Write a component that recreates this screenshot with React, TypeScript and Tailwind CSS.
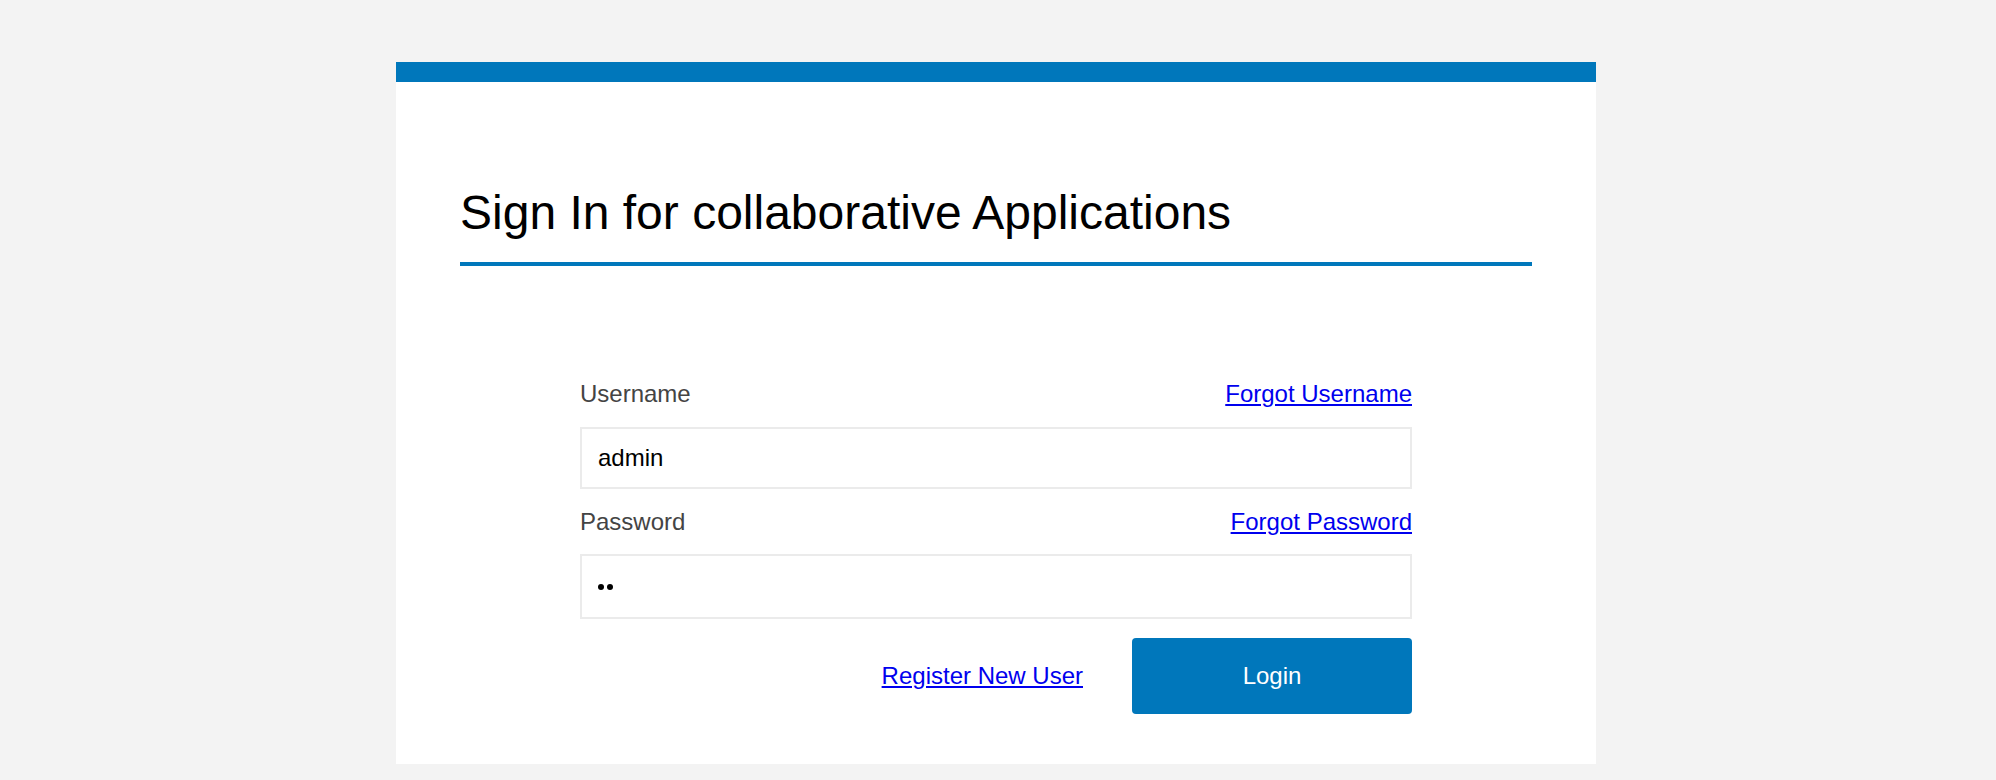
import React from "react";

export default function App() {
  return (
    <div
      className="min-h-[780px] w-full bg-[#f3f3f3] pt-[62px]"
      style={{ fontFamily: '"Liberation Sans", Arial, Helvetica, sans-serif' }}
    >
      <div className="ml-[396px] w-[1200px] bg-white">
        <div className="h-[20px] bg-[#0077bb]" />
        <div className="px-[64px] pb-[50px] pt-[103px]">
          <h1 className="border-b-4 border-[#0077bb] pb-[21px] text-[48px] font-normal leading-[56px] text-black">
            Sign In for collaborative Applications
          </h1>
          <div className="mx-auto mt-[114px] w-[832px]">
            <div className="flex h-[28px] items-center justify-between text-[24px] leading-[28px]">
              <span className="text-[#444444]">Username</span>
              <a href="#" className="text-[#0000ee] underline">
                Forgot Username
              </a>
            </div>
            <div className="mt-[19px] flex h-[62px] items-center border-2 border-[#ebebeb] px-[16px] text-[24px] leading-[28px] text-black">
              admin
            </div>
            <div className="mt-[19px] flex h-[28px] items-center justify-between text-[24px] leading-[28px]">
              <span className="text-[#444444]">Password</span>
              <a href="#" className="text-[#0000ee] underline">
                Forgot Password
              </a>
            </div>
            <div className="mt-[18px] flex h-[65px] items-center gap-[3px] border-2 border-[#ebebeb] px-[16px]">
              <span className="h-[6px] w-[6px] rounded-full bg-black" />
              <span className="h-[6px] w-[6px] rounded-full bg-black" />
            </div>
            <div className="mt-[19px] flex items-center justify-end gap-[49px]">
              <a href="#" className="text-[24px] leading-[28px] text-[#0000ee] underline">
                Register New User
              </a>
              <button className="flex h-[76px] w-[280px] items-center justify-center rounded-[4px] bg-[#0077bb] text-[24px] leading-[28px] text-white">
                Login
              </button>
            </div>
          </div>
        </div>
      </div>
    </div>
  );
}
